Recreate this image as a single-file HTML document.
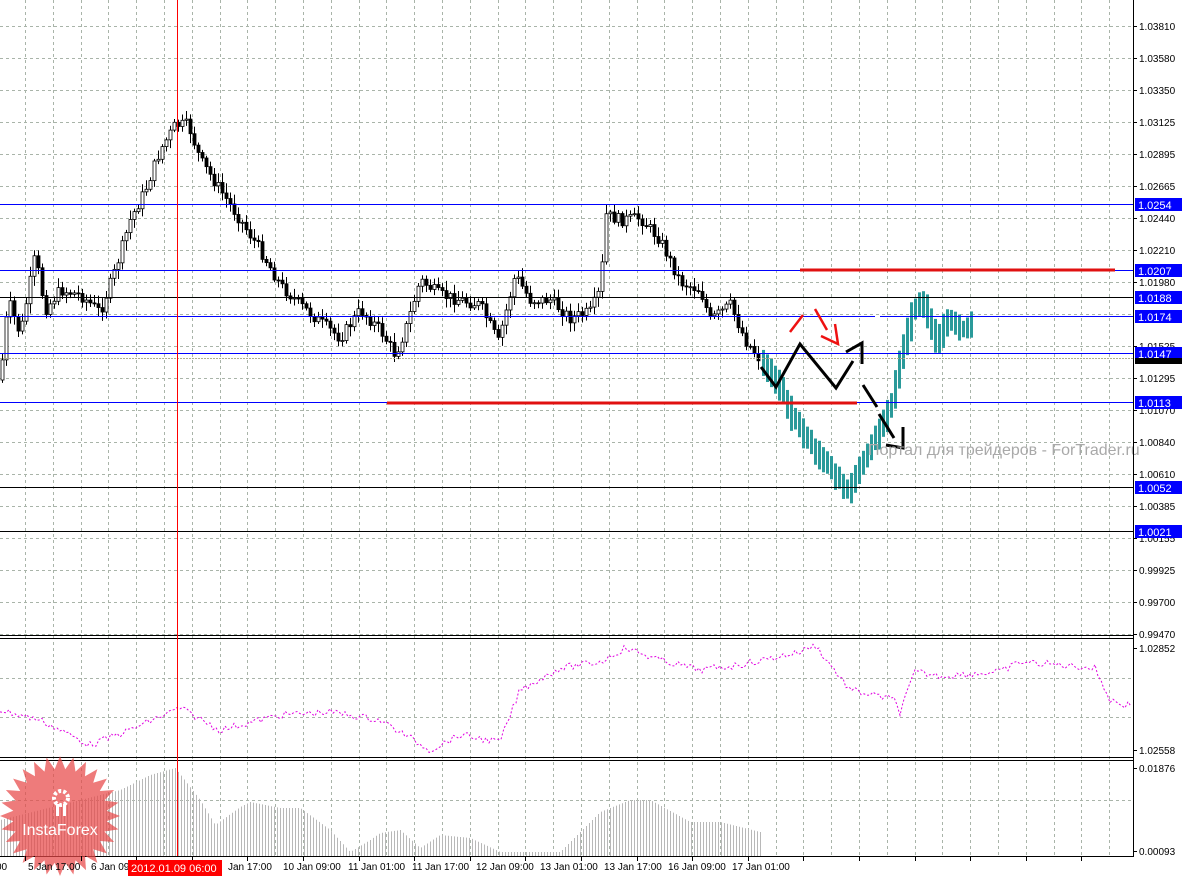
<!DOCTYPE html>
<html><head><meta charset="utf-8"><style>
html,body{margin:0;padding:0;background:#fff;width:1182px;height:876px;overflow:hidden}
svg{display:block;font-family:"Liberation Sans","DejaVu Sans",sans-serif}
</style></head><body>
<svg id="s" width="1182" height="876" xmlns="http://www.w3.org/2000/svg">
<rect width="1182" height="876" fill="#fff"/>
<g id="grid" stroke="#a9b4a9" stroke-width="1" stroke-dasharray="3,3"></g>
<g id="hist" stroke="#b8b8b8" stroke-width="1"></g>
<g id="candles"></g>
<g stroke="#0000ff" stroke-width="1">
<line x1="0" y1="204.5" x2="1134" y2="204.5"/>
<line x1="0" y1="270.5" x2="1134" y2="270.5"/>
<line x1="0" y1="316.5" x2="875" y2="316.5"/>
<line x1="880" y1="316.5" x2="1134" y2="316.5"/>
<line x1="0" y1="353.5" x2="1134" y2="353.5"/>
<line x1="0" y1="402.5" x2="1134" y2="402.5"/>
</g>
<g stroke="#000" stroke-width="1">
<line x1="0" y1="297.5" x2="1134" y2="297.5"/>
<line x1="0" y1="487.5" x2="1134" y2="487.5"/>
<line x1="0" y1="531.5" x2="1134" y2="531.5"/>
</g>
<line x1="0" y1="358.5" x2="1134" y2="358.5" stroke="#b0b090" stroke-width="1" stroke-dasharray="2,1"/>
<line x1="800" y1="270" x2="1115" y2="270" stroke="#e01010" stroke-width="3"/>
<line x1="387" y1="403" x2="857" y2="403" stroke="#e01010" stroke-width="3"/>
<g stroke="#000" stroke-width="3" fill="none" stroke-linejoin="miter">
<polyline points="761,367 776,387 800,344 836,388 853,361"/>
<polyline points="846,352 862,343 862,364"/>
<line x1="863" y1="385" x2="877" y2="407"/>
<line x1="879" y1="414" x2="894" y2="438"/>
<polyline points="886,445 903,448 903,427"/>
</g>
<g stroke="#ee1111" stroke-width="2.5" fill="none">
<line x1="790" y1="332" x2="803" y2="315"/>
<line x1="815" y1="309" x2="827" y2="330"/>
<polyline points="821,336 838,344 835,324"/>
</g>
<text x="868" y="455" font-size="16" fill="#a9a9a9">Портал для трейдеров - ForTrader.ru</text>
<polyline id="ind" fill="none" stroke="#e000e0" stroke-width="1" stroke-dasharray="2,2"/>
<rect x="0" y="635" width="1134" height="1" fill="#000"/>
<rect x="0" y="638" width="1134" height="1" fill="#000"/>
<rect x="0" y="757" width="1134" height="1" fill="#000"/>
<rect x="0" y="760" width="1134" height="1" fill="#000"/>
<rect x="0" y="856" width="1134" height="1" fill="#000"/>
<rect x="1133" y="0" width="1" height="857" fill="#000"/>
<g id="axis" font-size="10" fill="#000"></g>
<g opacity="0.72">
<polygon id="star" fill="#e84848"/>
</g>
<rect x="177" y="0" width="1" height="856" fill="#ff0000"/>
<g fill="#fff">
<circle cx="61" cy="798" r="7" fill="none" stroke="#fff" stroke-width="4" stroke-dasharray="3,2"/>
<rect x="56" y="804" width="3" height="12"/><rect x="63" y="804" width="3" height="12"/>
<text x="60" y="835" font-size="16" text-anchor="middle">InstaForex</text>
</g>
<g font-size="10" fill="#000" id="times"></g>
<rect x="128" y="860" width="94" height="16" fill="#ff0000"/>
<text x="131" y="872" font-size="11" fill="#fff">2012.01.09 06:00</text>
</svg>
<script>
var NS="http://www.w3.org/2000/svg";
function el(p,t,a){var e=document.createElementNS(NS,t);for(var k in a)e.setAttribute(k,a[k]);p.appendChild(e);return e;}
var g=document.getElementById('grid');
for(var x=25;x<1133;x+=27.8){el(g,'line',{x1:Math.round(x)+.5,y1:0,x2:Math.round(x)+.5,y2:856});}
for(var y=26;y<636;y+=32){el(g,'line',{x1:0,y1:y+.5,x2:1133,y2:y+.5});}
el(g,'line',{x1:0,y1:678.5,x2:1133,y2:678.5});el(g,'line',{x1:0,y1:717.5,x2:1133,y2:717.5});
el(g,'line',{x1:0,y1:800.5,x2:1133,y2:800.5});
function interp(pts,x){for(var i=1;i<pts.length;i++){if(x<=pts[i][0]){var a=pts[i-1],b=pts[i];return a[1]+(b[1]-a[1])*(x-a[0])/(b[0]-a[0]);}}return pts[pts.length-1][1];}
var P=[[0,380],[8,300],[20,335],[35,255],[45,310],[60,290],[80,295],[100,312],[115,270],[130,220],[145,190],[160,150],[175,125],[188,125],[200,160],[220,190],[240,220],[260,250],[280,285],[300,305],[320,322],[340,338],[360,310],[380,330],[395,355],[405,330],[420,280],[440,295],[460,300],[480,305],[498,342],[515,275],[530,300],[550,300],[570,318],[590,312],[600,290],[606,215],[620,220],[640,218],[660,240],[680,282],[700,290],[710,320],[730,305],[745,340],[760,360],[775,380],[790,415],[810,445],[830,470],[845,490],[860,462],[875,432],[890,400],[900,350],[910,310],[920,298],[935,340],[945,315],[960,330],[972,318]];
var c=document.getElementById('candles');
var seed=7;function rnd(){seed=(seed*9301+49297)%233280;return seed/233280;}
var prev=interp(P,0);
for(var x=2;x<=760;x+=4){var cl=interp(P,x)+ (rnd()-0.5)*12;var o=prev;var hi=Math.min(o,cl)-2-rnd()*8,lo=Math.max(o,cl)+2+rnd()*8;
el(c,'line',{x1:x+.5,y1:hi,x2:x+.5,y2:lo,stroke:'#000','stroke-width':1});
var up=cl<o;el(c,'rect',{x:x-1,y:Math.min(o,cl),width:3,height:Math.max(1,Math.abs(o-cl)),fill:up?'#fff':'#000',stroke:'#000','stroke-width':0.8});prev=cl;}
for(var x=762;x<=972;x+=4){var a=interp(P,x-4),b=interp(P,x);var t=Math.min(a,b)-6-rnd()*4,bo=Math.max(a,b)+8+rnd()*8;
el(c,'rect',{x:x,y:t,width:3,height:bo-t,fill:'#2a9a9a'});}
var I=[[0,710],[40,720],[90,745],[130,730],[180,708],[220,730],[280,715],[330,712],[380,720],[430,750],[460,735],[500,742],[520,690],[560,668],[600,662],[625,648],[660,660],[700,670],[740,665],[800,652],[815,645],[850,690],[895,700],[900,712],[915,672],[940,676],[1000,672],[1020,662],[1060,665],[1095,668],[1110,700],[1125,705],[1133,704]];
var s='';for(var x=0;x<=1133;x+=3){s+=x+','+(interp(I,x)+(rnd()-0.5)*7).toFixed(1)+' ';}
document.getElementById('ind').setAttribute('points',s);
var H=[[0,820],[60,805],[120,790],[150,775],[175,768],[200,800],[215,825],[240,807],[250,802],[280,808],[300,808],[330,830],[350,852],[370,840],[380,833],[400,830],[420,848],[440,835],[470,838],[500,852],[560,852],[600,812],[630,800],[650,800],[690,822],[720,822],[760,832]];
var h=document.getElementById('hist');
for(var x=1;x<=760;x+=3){el(h,'line',{x1:x+.5,y1:interp(H,x),x2:x+.5,y2:856});}
var ax=document.getElementById('axis');
var labels=[[26,'1.03810'],[58,'1.03580'],[90,'1.03350'],[122,'1.03125'],[154,'1.02895'],[186,'1.02665'],[218,'1.02440'],[250,'1.02210'],[282,'1.01980'],[346,'1.01525'],[378,'1.01295'],[410,'1.01070'],[442,'1.00840'],[474,'1.00610'],[506,'1.00385'],[538,'1.00155'],[570,'0.99925'],[602,'0.99700'],[634,'0.99470'],[648,'1.02852'],[750,'1.02558'],[768,'0.01876'],[851,'0.00093']];
labels.forEach(function(l){el(ax,'line',{x1:1133,y1:l[0]+.5,x2:1137,y2:l[0]+.5,stroke:'#000'});var t=el(ax,'text',{x:1139,y:l[0]+4});t.textContent=l[1];});
[[204,'1.0254'],[270,'1.0207'],[297,'1.0188'],[316,'1.0174'],[353,'1.0147'],[402,'1.0113'],[487,'1.0052'],[531,'1.0021']].forEach(function(l){
el(ax,'rect',{x:1135,y:l[0]-6,width:47,height:13,fill:'#0000ff'});
var t=el(ax,'text',{x:1138,y:l[0]+5,fill:'#fff','font-size':11});t.textContent=l[1];});
el(ax,'rect',{x:1135,y:358,width:47,height:6,fill:'#000'});
var st=document.getElementById('star'),pts='';
for(var i=0;i<56;i++){var r=i%2?47:60,a=i*Math.PI/28;pts+=(60+r*Math.cos(a)).toFixed(1)+','+(816+r*Math.sin(a)).toFixed(1)+' ';}
st.setAttribute('points',pts);
var tm=document.getElementById('times');
[[-4,'00'],[28,'5 Jan 17:00'],[91,'6 Jan 09:'],[228,'Jan 17:00'],[283,'10 Jan 09:00'],[348,'11 Jan 01:00'],[412,'11 Jan 17:00'],[476,'12 Jan 09:00'],[540,'13 Jan 01:00'],[604,'13 Jan 17:00'],[668,'16 Jan 09:00'],[732,'17 Jan 01:00']].forEach(function(l){var t=el(tm,'text',{x:l[0],y:870});t.textContent=l[1];});
for(var x=25;x<1133;x+=55.6){el(tm,'line',{x1:Math.round(x)+.5,y1:856,x2:Math.round(x)+.5,y2:861,stroke:'#000'});}
</script>
</body></html>
